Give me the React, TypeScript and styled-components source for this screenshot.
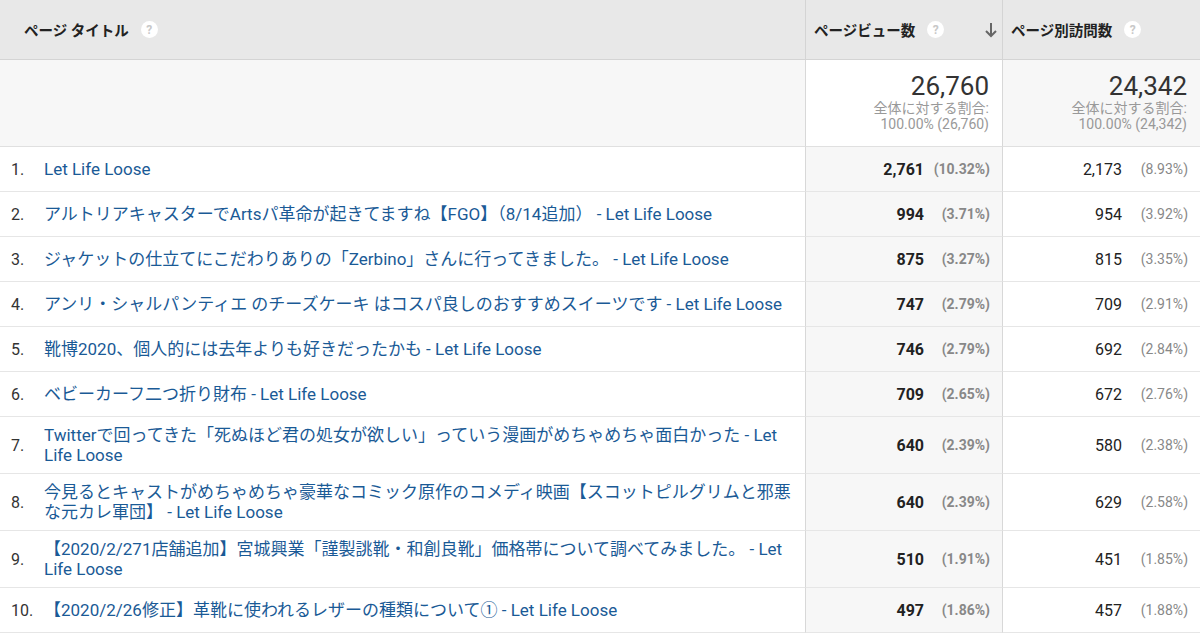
import styled, { createGlobalStyle } from "styled-components";

const GlobalStyle = createGlobalStyle`
  body {
    margin: 0;
    background: #fff;
    font-family: Roboto, "Noto Sans CJK JP", sans-serif;
    color: #222;
  }
`;

const Table = styled.div`
  display: grid;
  grid-template-columns: 805px 197px 198px;
  width: 1200px;
`;

const HeadCell = styled.div<{ first?: boolean }>`
  height: 60px;
  box-sizing: border-box;
  background: #e8e8e8;
  border-bottom: 1px solid #d4d4d4;
  border-left: ${({ first }) => (first ? "none" : "1px solid #d4d4d4")};
  display: flex;
  align-items: center;
  padding: 0 ${({ first }) => (first ? "0 0 24px" : "0 0 8px")};
  font-size: 14.5px;
  font-weight: 700;
  color: #222;
  gap: 8px;
  position: relative;
`;

const Help = styled.span`
  width: 17px;
  height: 17px;
  border-radius: 50%;
  background: #fff;
  color: #c8c8c8;
  font-size: 12px;
  font-weight: 700;
  display: inline-flex;
  align-items: center;
  justify-content: center;
  margin-left: 4px;
`;

const SortArrow = styled.span`
  margin-left: auto;
  margin-right: 4px;
  display: flex;
`;

const SumCell = styled.div<{ shade?: boolean; first?: boolean }>`
  height: 87px;
  background: ${({ shade }) => (shade ? "#f7f7f7" : "#fff")};
  border-left: ${({ first }) => (first ? "none" : "1px solid #d8d8d8")};
  border-bottom: 1px solid #e0e0e0;
  display: flex;
  flex-direction: column;
  align-items: flex-end;
  padding: 12px 13px 0 0;
  box-sizing: border-box;
`;

const Big = styled.div`
  font-size: 26px;
  line-height: 28px;
  color: #333;
`;

const Small = styled.div`
  font-size: 14px;
  line-height: 16px;
  color: #999;
  text-align: right;
`;

const Cell = styled.div<{ shade?: boolean; first?: boolean; tall?: boolean }>`
  height: ${({ tall }) => (tall ? "57px" : "45px")};
  box-sizing: border-box;
  background: ${({ shade }) => (shade ? "#f7f7f7" : "#fff")};
  border-left: ${({ first }) => (first ? "none" : "1px solid #d8d8d8")};
  border-bottom: 1px solid #e6e6e6;
  display: flex;
  align-items: center;
  font-size: 16px;
  padding: ${({ first }) => (first ? "0 10px 0 11px" : "0 12px 0 8px")};
  justify-content: ${({ first }) => (first ? "flex-start" : "flex-end")};
`;

const Index = styled.span`
  width: 33px;
  flex: none;
  font-size: 16px;
  color: #333;
`;

const Link = styled.span`
  color: #1a5a96;
  font-size: 17px;
  line-height: 20px;
`;

const Num = styled.span<{ bold?: boolean }>`
  font-weight: ${({ bold }) => (bold ? 700 : 400)};
  color: #222;
`;

const Pct = styled.span`
  width: 66px;
  text-align: right;
  font-size: 14px;
  font-weight: 700;
  color: #888;
`;

const PctLight = styled(Pct)`
  font-weight: 400;
`;

const rows = [
  ["Let Life Loose", "2,761", "10.32%", "2,173", "8.93%"],
  ["アルトリアキャスターでArtsパ革命が起きてますね【FGO】（8/14追加） - Let Life Loose", "994", "3.71%", "954", "3.92%"],
  ["ジャケットの仕立てにこだわりありの「Zerbino」さんに行ってきました。 - Let Life Loose", "875", "3.27%", "815", "3.35%"],
  ["アンリ・シャルパンティエ のチーズケーキ はコスパ良しのおすすめスイーツです - Let Life Loose", "747", "2.79%", "709", "2.91%"],
  ["靴博2020、個人的には去年よりも好きだったかも - Let Life Loose", "746", "2.79%", "692", "2.84%"],
  ["ベビーカーフ二つ折り財布 - Let Life Loose", "709", "2.65%", "672", "2.76%"],
  ["Twitterで回ってきた「死ぬほど君の処女が欲しい」っていう漫画がめちゃめちゃ面白かった - Let Life Loose", "640", "2.39%", "580", "2.38%"],
  ["今見るとキャストがめちゃめちゃ豪華なコミック原作のコメディ映画【スコットピルグリムと邪悪な元カレ軍団】 - Let Life Loose", "640", "2.39%", "629", "2.58%"],
  ["【2020/2/271店舗追加】宮城興業「謹製誂靴・和創良靴」価格帯について調べてみました。 - Let Life Loose", "510", "1.91%", "451", "1.85%"],
  ["【2020/2/26修正】革靴に使われるレザーの種類について① - Let Life Loose", "497", "1.86%", "457", "1.88%"],
];

export default function App() {
  return (
    <>
      <GlobalStyle />
      <Table>
        <HeadCell first>
          ページ タイトル<Help>?</Help>
        </HeadCell>
        <HeadCell>
          ページビュー数<Help>?</Help>
          <SortArrow>
            <svg width="14" height="16" viewBox="0 0 14 16">
              <path d="M7 1v13M2 9l5 5 5-5" stroke="#666" strokeWidth="2" fill="none" />
            </svg>
          </SortArrow>
        </HeadCell>
        <HeadCell>
          ページ別訪問数<Help>?</Help>
        </HeadCell>

        <SumCell first shade />
        <SumCell>
          <Big>26,760</Big>
          <Small>全体に対する割合:</Small>
          <Small>100.00% (26,760)</Small>
        </SumCell>
        <SumCell shade>
          <Big>24,342</Big>
          <Small>全体に対する割合:</Small>
          <Small>100.00% (24,342)</Small>
        </SumCell>

        {rows.map((r, i) => {
          const tall = i >= 6 && i <= 8;
          return [
            <Cell first tall={tall} key={`a${i}`}>
              <Index>{i + 1}.</Index>
              <Link>{r[0]}</Link>
            </Cell>,
            <Cell shade tall={tall} key={`b${i}`}>
              <Num bold>{r[1]}</Num>
              <Pct>({r[2]})</Pct>
            </Cell>,
            <Cell tall={tall} key={`c${i}`}>
              <Num>{r[3]}</Num>
              <PctLight>({r[4]})</PctLight>
            </Cell>,
          ];
        })}
      </Table>
    </>
  );
}
